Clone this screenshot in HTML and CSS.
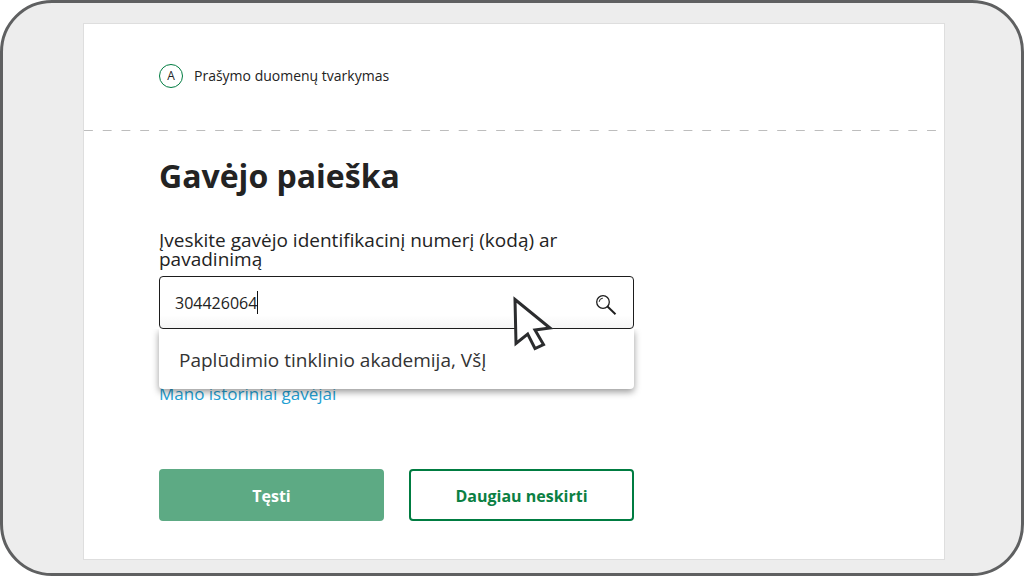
FILE: index.html
```html
<!DOCTYPE html>
<html lang="lt">
<head>
<meta charset="utf-8">
<meta name="viewport" content="width=device-width, initial-scale=1">
<title>Gavėjo paieška</title>
<link rel="stylesheet" href="styles.css">
</head>
<body>
<div class="frame">
  <main class="card">
    <header class="step">
      <span class="step-badge">A</span>
      <span class="step-title">Prašymo duomenų tvarkymas</span>
    </header>
    <form class="search-form">
      <h1 class="title">Gavėjo paieška</h1>
      <label class="label" for="recipient">Įveskite gavėjo identifikacinį numerį (kodą) ar pavadinimą</label>
      <div class="field">
        <div class="input-box">
          <input class="input" id="recipient" type="text" value="304426064" autocomplete="off">
          <span class="caret"></span>
          <button class="search-button" type="button" aria-label="Ieškoti">
            <svg width="22" height="22" viewBox="0 0 22 22" fill="none" stroke="#1d1d1d">
              <circle cx="8" cy="8" r="6.3" stroke-width="1.3"/>
              <path d="M4.2 7.8A3.8 3.8 0 0 1 7.8 4.2" stroke-width="1"/>
              <path d="M12.5 12.5L20.5 20.3" stroke-width="1.9"/>
            </svg>
          </button>
        </div>
        <ul class="options">
          <li class="option">Paplūdimio tinklinio akademija, VšĮ</li>
        </ul>
        <svg class="pointer" width="42" height="56" viewBox="0 0 42 56">
          <path d="M3 4.5L38 33L23 35L31.5 49.5L23 53.5L15.7 39L4 48.5Z" fill="#fff" stroke="#2b2c2e" stroke-width="3"/>
        </svg>
      </div>
      <a class="history" href="#">Mano istoriniai gavėjai</a>
      <div class="actions">
        <button class="button primary" type="submit">Tęsti</button>
        <button class="button secondary" type="button">Daugiau neskirti</button>
      </div>
    </form>
  </main>
</div>
</body>
</html>
```
FILE: styles.css
```css
* {
  box-sizing: border-box;
}

body {
  margin: 0;
  background: #fff;
  color: #232323;
  font-family: "Open Sans", "Noto Sans", sans-serif;
}

.frame {
  display: flex;
  min-height: 100vh;
  padding: 20px 76px 13px 80px;
  border: 3px solid #5f6061;
  border-radius: 52px;
  background: #ededed;
}

.card {
  flex: 1;
  border: 1px solid #dedede;
  background: #fff;
}

.step {
  display: flex;
  align-items: center;
  gap: 11px;
  height: 107px;
  padding: 0 75px 4px;
  background: linear-gradient(90deg, #bdbdbd 48%, transparent 48%) 0 100% / 2.18% 1px repeat-x;
}

.step-badge {
  display: grid;
  place-items: center;
  width: 24px;
  height: 24px;
  border: 1px solid #007c41;
  border-radius: 50%;
  font-size: 12px;
}

.step-title {
  font-size: 14px;
}

.search-form {
  display: flex;
  flex-direction: column;
  max-width: 550px;
  padding: 24px 0 38px 75px;
}

.title {
  margin: 0 0 34px;
  font-size: 32px;
  line-height: 42px;
  font-weight: 700;
}

.label {
  margin-bottom: 7px;
  font-size: 19px;
  line-height: 19px;
}

.field {
  position: relative;
}

.input-box {
  display: flex;
  align-items: center;
  height: 53px;
  padding: 0 16px 0 15px;
  border: 1px solid #1d1d1d;
  border-radius: 4px;
  background: linear-gradient(#fff 75%, #f5f5f5);
}

.input {
  field-sizing: content;
  min-width: 0;
  padding: 0;
  border: 0;
  outline: 0;
  background: none;
  color: inherit;
  font: inherit;
  font-size: 16px;
}

.caret {
  width: 1px;
  height: 23px;
  background: #111;
}

.search-button {
  display: flex;
  margin-left: auto;
  padding: 4px 0 0;
  border: 0;
  background: none;
}

.options {
  position: absolute;
  top: 100%;
  left: 0;
  right: 0;
  margin: 0;
  padding: 0;
  border-radius: 0 0 4px 4px;
  background: #fff;
  box-shadow: 0 3px 7px rgba(0, 0, 0, 0.4);
  clip-path: inset(0 -16px -16px);
  list-style: none;
}

.option {
  padding: 17px 20px 15px;
  color: #333;
  font-size: 19px;
  line-height: 28px;
}

.pointer {
  position: absolute;
  top: 19px;
  left: 353px;
}

.history {
  align-self: flex-start;
  margin-top: 53px;
  color: #249fd3;
  font-size: 17px;
  line-height: 24px;
  text-decoration: none;
}

.actions {
  display: grid;
  grid-template-columns: 1fr 1fr;
  gap: 25px;
  margin-top: 63px;
}

.button {
  height: 52px;
  padding: 2px 6px 0;
  border: 2px solid #007c41;
  border-radius: 4px;
  background: #fff;
  color: #0b8043;
  font: inherit;
  font-size: 16px;
  font-weight: 700;
}

.primary {
  border-color: #5daa84;
  background: #5daa84;
  color: #fff;
}
```
